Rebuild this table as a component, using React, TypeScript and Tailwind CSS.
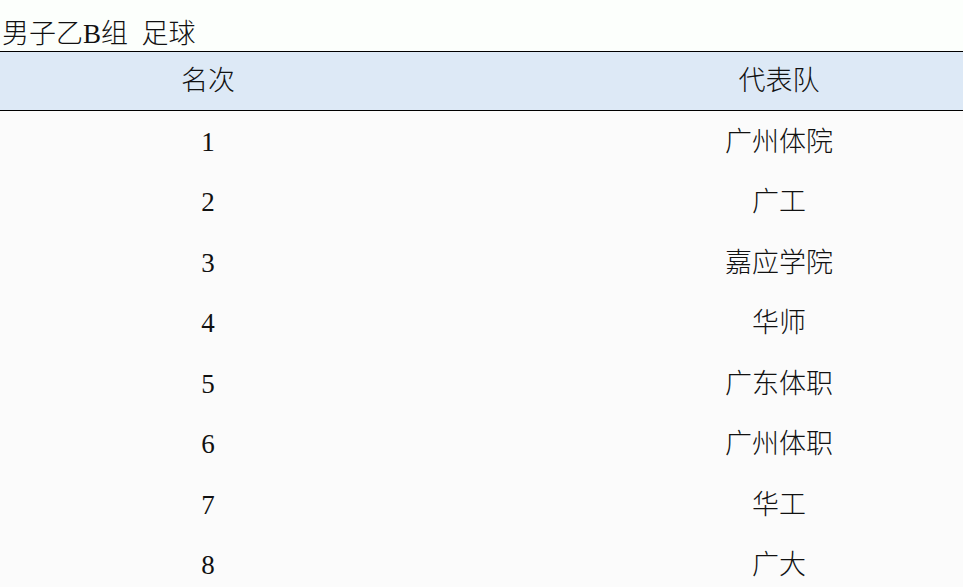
const rows: [string, string][] = [
  ["1", "广州体院"],
  ["2", "广工"],
  ["3", "嘉应学院"],
  ["4", "华师"],
  ["5", "广东体职"],
  ["6", "广州体职"],
  ["7", "华工"],
  ["8", "广大"],
];

export default function App() {
  return (
    <div
      className="w-[963px] h-[587px] overflow-hidden bg-[#fbfbfb] text-[#111] text-[27px]"
      style={{ fontFamily: '"Liberation Serif", "Noto Sans CJK SC", serif' }}
    >
      <div className="h-[51px] bg-[#fcfffc] flex items-end pl-[2px] pb-[1px] leading-[32px] font-light whitespace-pre">
        男子乙B组  足球
      </div>
      <div className="w-[1142px]">
        <div className="grid grid-cols-[416px_726px] h-[60px] bg-[#dde9f6] border-y border-black font-light">
          <div className="flex items-center justify-center">名次</div>
          <div className="flex items-center justify-center">代表队</div>
        </div>
        <div className="pt-[1px]">
          {rows.map(([rank, team]) => (
            <div key={rank} className="grid grid-cols-[416px_726px] h-[60.45px] font-light">
              <div className="flex items-center justify-center">{rank}</div>
              <div className="flex items-center justify-center">{team}</div>
            </div>
          ))}
        </div>
      </div>
    </div>
  );
}
